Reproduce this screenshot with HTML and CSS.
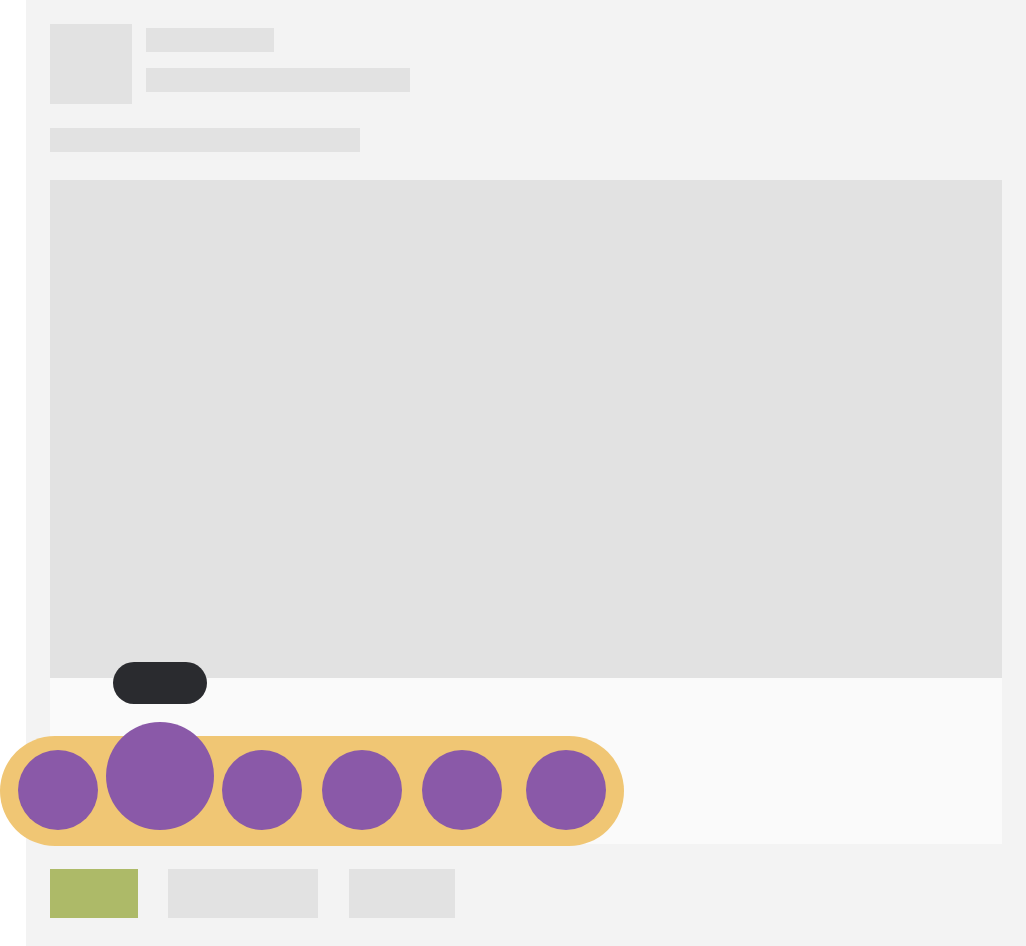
FILE: index.html
```html
<!DOCTYPE html>
<html lang="en">
<head>
<meta charset="utf-8">
<title>Post skeleton</title>
<link rel="stylesheet" href="styles.css">
</head>
<body>
<div class="card">
  <div class="header">
    <div class="avatar"></div>
    <div class="meta">
      <div class="bar bar-name"></div>
      <div class="bar bar-sub"></div>
    </div>
  </div>
  <div class="bar bar-text"></div>
  <div class="media"></div>
  <div class="footer-area"></div>
  <div class="actions">
    <div class="btn btn-like"></div>
    <div class="btn btn-comment"></div>
    <div class="btn btn-share"></div>
  </div>
  <div class="tooltip"></div>
  <div class="reactions">
    <div class="reaction r1"></div>
    <div class="reaction r2 active"></div>
    <div class="reaction r3"></div>
    <div class="reaction r4"></div>
    <div class="reaction r5"></div>
    <div class="reaction r6"></div>
  </div>
</div>
</body>
</html>
```

FILE: styles.css
```css
html, body {
  margin: 0;
  padding: 0;
  background: #ffffff;
  font-family: "Liberation Sans", Arial, sans-serif;
}

body {
  width: 1026px;
  height: 946px;
  overflow: hidden;
}

.card {
  position: relative;
  margin-left: 26px;
  width: 1000px;
  height: 946px;
  box-sizing: border-box;
  padding: 24px 24px 28px 24px;
  background: #f3f3f3;
}

.header {
  display: flex;
  gap: 14px;
}

.avatar {
  width: 82px;
  height: 80px;
  background: #e2e2e2;
}

.meta {
  display: flex;
  flex-direction: column;
  gap: 16px;
  padding-top: 4px;
}

.bar {
  height: 24px;
  background: #e2e2e2;
}

.bar-name { width: 128px; }
.bar-sub { width: 264px; }
.bar-text { width: 310px; margin-top: 24px; }

.media {
  margin-top: 28px;
  height: 498px;
  background: #e2e2e2;
}

.footer-area {
  height: 166px;
  background: #fafafa;
}

.actions {
  display: flex;
  margin-top: 25px;
}

.btn {
  height: 49px;
  background: #e2e2e2;
}

.btn-like { width: 88px; background: #adba68; }
.btn-comment { width: 150px; margin-left: 30px; }
.btn-share { width: 106px; margin-left: 31px; }

.tooltip {
  position: absolute;
  left: 87px;
  top: 662px;
  width: 94px;
  height: 42px;
  border-radius: 21px;
  background: #2a2b2f;
}

.reactions {
  position: absolute;
  left: -26px;
  top: 736px;
  width: 624px;
  height: 110px;
  box-sizing: border-box;
  padding: 0 18px 16px 18px;
  border-radius: 55px;
  background: #f0c674;
  display: flex;
  align-items: flex-end;
}

.reaction {
  flex: none;
  width: 80px;
  height: 80px;
  border-radius: 50%;
  background: #8a59a8;
}

.reaction.active {
  width: 108px;
  height: 108px;
}

.r2 { margin-left: 8px; }
.r3 { margin-left: 8px; }
.r4 { margin-left: 20px; }
.r5 { margin-left: 20px; }
.r6 { margin-left: 24px; }
```
